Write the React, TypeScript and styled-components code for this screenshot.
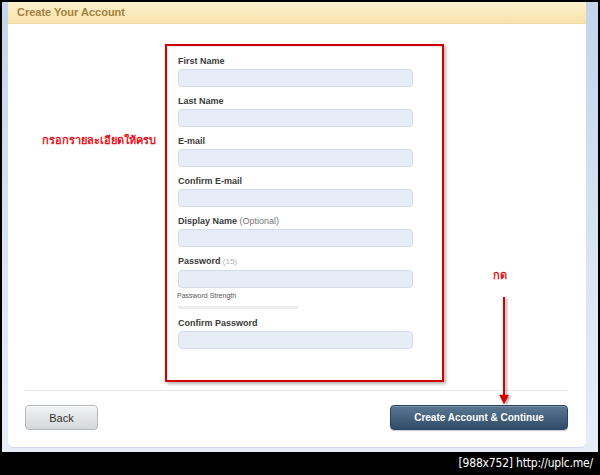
import styled, { createGlobalStyle } from "styled-components";

const GlobalStyle = createGlobalStyle`
  html, body {
    margin: 0;
    padding: 0;
    background: #000;
  }
  body {
    font-family: "Liberation Sans", Arial, sans-serif;
  }
`;

interface Field {
  label: string;
  note?: string;
  faint?: boolean;
  strength?: boolean;
}

const fields: Field[] = [
  { label: "First Name" },
  { label: "Last Name" },
  { label: "E-mail" },
  { label: "Confirm E-mail" },
  { label: "Display Name", note: "(Optional)" },
  { label: "Password", note: "(15)", faint: true, strength: true },
  { label: "Confirm Password" }
];

export default function App() {
  return (
    <>
      <GlobalStyle />
      <Screen>
        <Frame>
          <Panel>
            <Header>Create Your Account</Header>
            <Body>
              <FormRow>
                <SideNote>กรอกรายละเอียดให้ครบ</SideNote>
                <FormBox>
                  {fields.map((f) => (
                    <FieldGroup key={f.label}>
                      <Label>
                        {f.label}
                        {f.note && <Note $faint={f.faint}> {f.note}</Note>}
                      </Label>
                      <Input type="text" />
                      {f.strength && (
                        <Strength>
                          <span>Password Strength</span>
                          <StrengthBar />
                        </Strength>
                      )}
                    </FieldGroup>
                  ))}
                </FormBox>
              </FormRow>
              <Divider />
              <Footer>
                <BackButton>Back</BackButton>
                <PrimaryButton>Create Account &amp; Continue</PrimaryButton>
              </Footer>
              <Callout>
                <CalloutText>กด</CalloutText>
                <svg width="16" height="112" viewBox="0 0 16 112">
                  <defs>
                    <filter id="arrowShadow" x="-50%" y="-10%" width="200%" height="120%">
                      <feDropShadow dx="2" dy="1" stdDeviation="0.8" floodColor="#000" floodOpacity="0.35" />
                    </filter>
                  </defs>
                  <g filter="url(#arrowShadow)" fill="#d40000" stroke="#d40000">
                    <line x1="7" y1="1" x2="7" y2="100" strokeWidth="2" />
                    <polygon points="2.5,99 11.5,99 7,108" strokeWidth="0.5" />
                  </g>
                </svg>
              </Callout>
            </Body>
          </Panel>
        </Frame>
        <Watermark>[988x752] http://uplc.me/</Watermark>
      </Screen>
    </>
  );
}

const Screen = styled.div`
  width: 600px;
  height: 475px;
  background: #000;
  padding: 2px 2px 0 2px;
  box-sizing: border-box;
  overflow: hidden;
`;

const Frame = styled.div`
  height: 450px;
  padding: 0 12px 5px 6px;
  box-sizing: border-box;
  background: linear-gradient(to bottom, #c4d4ea, #dbe5f3 60%, #e6edf7);
`;

const Panel = styled.div`
  height: 100%;
  display: flex;
  flex-direction: column;
  background: #fff;
  border-radius: 0 0 5px 5px;
  box-shadow: 0 1px 0 #cfdaea;
`;

const Header = styled.div`
  height: 22px;
  line-height: 21px;
  padding-left: 9px;
  font-size: 11px;
  font-weight: bold;
  color: #a3803f;
  background: linear-gradient(to bottom, #fcf0cf, #f7e3a9);
  border-bottom: 1px solid #eedba8;
  box-sizing: border-box;
`;

const Body = styled.div`
  position: relative;
  flex: 1;
  padding: 20px 18px 0 17px;
`;

const FormRow = styled.div`
  display: grid;
  grid-template-columns: 140px 279px 1fr;
`;

const SideNote = styled.div`
  padding: 87px 0 0 17px;
  font-family: "Tahoma", "DejaVu Sans", sans-serif;
  font-size: 11px;
  font-weight: bold;
  color: #e8141c;
  white-space: nowrap;
`;

const FormBox = styled.div`
  border: 2px solid #d40000;
  padding: 9px 11px 31px;
  box-shadow: 2px 2px 3px rgba(0, 0, 0, 0.3), inset 1px 1px 0 #e8e8e8;
  display: flex;
  flex-direction: column;
  gap: 8px;
`;

const FieldGroup = styled.div`
  display: flex;
  flex-direction: column;
`;

const Label = styled.label`
  font-size: 9px;
  line-height: 12px;
  font-weight: bold;
  color: #3a3a3a;
  margin-bottom: 2px;
`;

const Note = styled.span<{ $faint?: boolean }>`
  font-weight: normal;
  color: ${({ $faint }) => ($faint ? "#b0b0b0" : "#777")};
  font-size: ${({ $faint }) => ($faint ? "8px" : "9px")};
`;

const Input = styled.input`
  width: 235px;
  height: 18px;
  box-sizing: border-box;
  margin: 0;
  border: 1px solid #d3dde9;
  border-radius: 4px;
  background: #e6edf6;
  outline: none;
`;

const Strength = styled.div`
  display: flex;
  flex-direction: column;
  font-size: 7px;
  line-height: 12px;
  color: #555;
  margin-top: 2px;

  span {
    margin-left: -1px;
  }
`;

const StrengthBar = styled.div`
  width: 120px;
  height: 3px;
  margin-top: 4px;
  background: #ececec;
  border-radius: 1px;
`;

const Divider = styled.div`
  height: 1px;
  background: #e6e9ec;
  margin-top: 8px;
`;

const Footer = styled.div`
  display: flex;
  justify-content: space-between;
  align-items: center;
  padding-top: 14px;
`;

const ButtonBase = styled.button`
  height: 25px;
  box-sizing: border-box;
  border-radius: 4px;
  font-family: "Liberation Sans", Arial, sans-serif;
  font-size: 11px;
  padding: 0;
  cursor: pointer;
`;

const BackButton = styled(ButtonBase)`
  width: 73px;
  color: #333;
  border: 1px solid #b3b8bd;
  background: linear-gradient(to bottom, #f2f3f4, #d5d8db);
  box-shadow: inset 0 1px 0 #fff;
`;

const PrimaryButton = styled(ButtonBase)`
  width: 178px;
  color: #fff;
  font-size: 10px;
  font-weight: bold;
  border: 1px solid #2b4560;
  background: linear-gradient(to bottom, #5a7894, #2f4b67);
  box-shadow: 0 1px 1px rgba(0, 0, 0, 0.2), inset 0 1px 0 rgba(255, 255, 255, 0.2);
`;

const Callout = styled.div`
  position: absolute;
  left: 489px;
  top: 242px;
  display: flex;
  flex-direction: column;
  align-items: flex-start;
`;

const CalloutText = styled.div`
  font-family: "Tahoma", "DejaVu Sans", sans-serif;
  font-size: 11px;
  font-weight: bold;
  color: #e8141c;
  margin: 0 0 12px -4px;
`;

const Watermark = styled.div`
  height: 23px;
  line-height: 23px;
  text-align: right;
  padding-right: 5px;
  color: #fff;
  font-family: "DejaVu Sans Condensed", "Liberation Sans Narrow", sans-serif;
  font-size: 12px;
  letter-spacing: -0.2px;
`;
